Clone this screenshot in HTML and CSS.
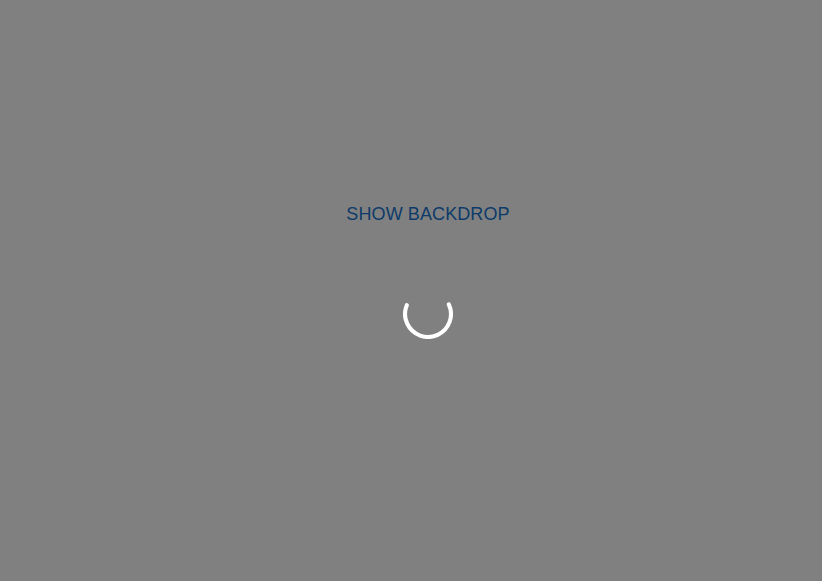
FILE: index.html
```html
<!DOCTYPE html>
<html lang="en">
<head>
<meta charset="utf-8">
<title>Backdrop</title>
<link rel="stylesheet" href="styles.css">
</head>
<body>
<main class="stage">
  <button class="text-button" type="button">SHOW BACKDROP</button>
  <div class="spinner" role="progressbar" aria-label="Loading">
    <svg class="spinner-svg" viewBox="0 0 50 50" width="50" height="50">
      <circle class="spinner-arc" cx="25" cy="25" r="22.95" fill="none" stroke="#ffffff" stroke-width="4.1" stroke-linecap="round" stroke-dasharray="90.5 200" transform="rotate(-25 25 25)"></circle>
    </svg>
  </div>
</main>
</body>
</html>
```

FILE: styles.css
```css
html, body {
  margin: 0;
  padding: 0;
  width: 100%;
  height: 100%;
  background: #808080;
}

.stage {
  box-sizing: border-box;
  width: 100%;
  min-height: 100%;
  display: flex;
  flex-direction: column;
  align-items: center;
  padding-top: 204px;
  padding-left: 34px;
}

.text-button {
  margin: 0;
  padding: 0;
  border: 0;
  background: transparent;
  font-family: "Liberation Sans", Arial, sans-serif;
  font-size: 18px;
  line-height: 21px;
  color: #0d3b69;
  cursor: pointer;
  letter-spacing: 0.1px;
}

.spinner {
  margin-top: 64px;
  width: 50px;
  height: 50px;
}

.spinner-svg {
  display: block;
}
```
